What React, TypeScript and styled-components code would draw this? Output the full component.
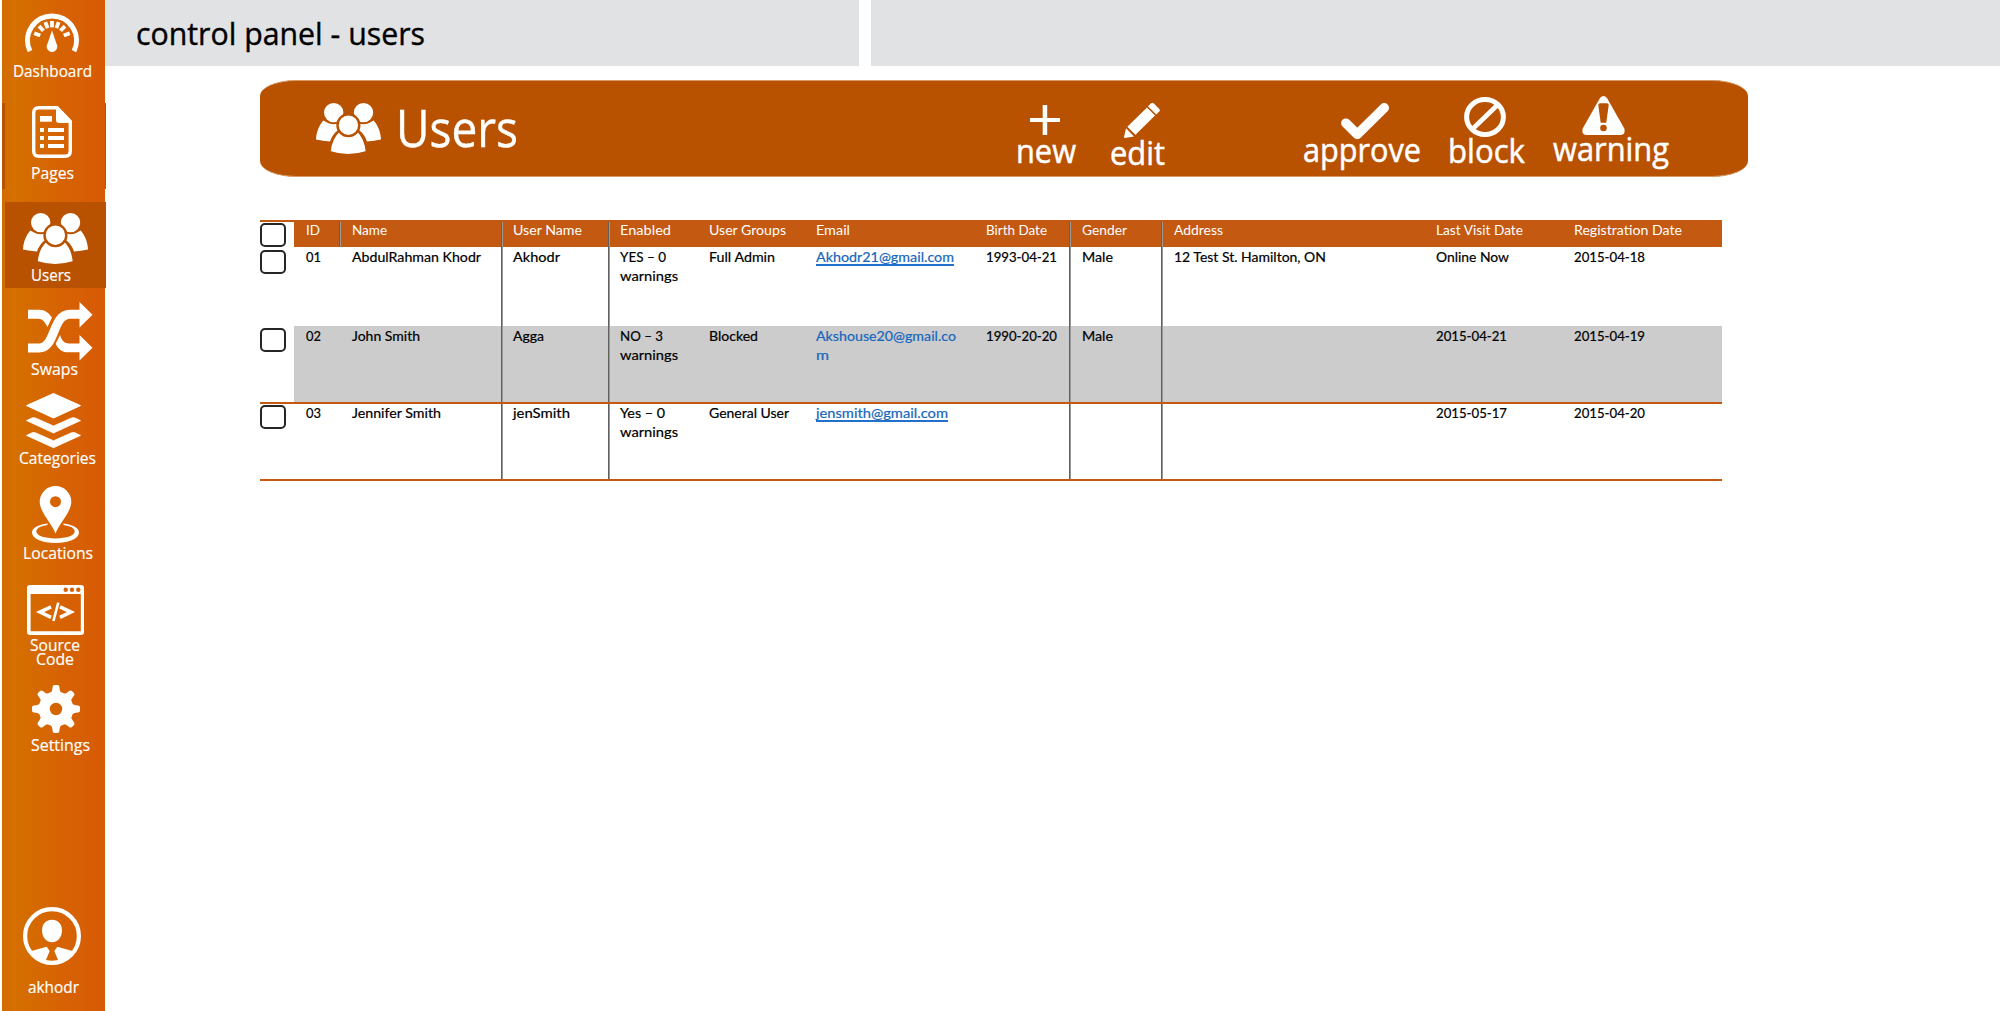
import React, { useLayoutEffect, useRef, useState } from 'react';
import styled, { createGlobalStyle } from 'styled-components';

const RUST = '#b85200';
const HEAD = '#c45911';
const UI = '"Open Sans", "Noto Sans", sans-serif';
const GRID = 'Lato, "Open Sans", sans-serif';

const Global = createGlobalStyle`
  * { box-sizing: border-box; }
  html, body { margin: 0; background: #fff; overflow: hidden; }
`;

/* ---------- text that is condensed to a given width ---------- */

const FitBox = styled.span<{ $w: number }>`
  display: block;
  width: ${p => p.$w}px;
  white-space: nowrap;
`;
const FitInner = styled.span`
  display: inline-block;
  transform-origin: 0 50%;
`;

function Fit({ w, children }: { w: number; children: React.ReactNode }) {
  const ref = useRef<HTMLSpanElement>(null);
  const [scale, setScale] = useState(1);
  useLayoutEffect(() => {
    const el = ref.current;
    if (!el) return;
    const old = el.style.transform;
    el.style.transform = 'none';
    const natural = el.getBoundingClientRect().width;
    el.style.transform = old;
    if (natural > 0) setScale(w / natural);
  }, [w, children]);
  return (
    <FitBox $w={w}>
      <FitInner ref={ref} style={{ transform: `scaleX(${scale})` }}>{children}</FitInner>
    </FitBox>
  );
}

/* ---------- icons ---------- */

const Svg = styled.svg`
  display: block;
  flex: none;
  overflow: visible;
  fill: #fff;
`;

const GaugeIcon = () => (
  <Svg width="54" height="40" viewBox="0 0 54 40">
    <path d="M5 38.2A24.5 24.5 0 1 1 49 38.2" fill="none" stroke="#fff" strokeWidth="5" />
    {[-69, -43, -20.5, 0, 20.5, 43, 69].map(a => (
      <rect key={a} x="25.1" y="8" width="3.8" height="6.4" transform={`rotate(${a} 27 27)`} />
    ))}
    <path d="M27 17.5L31.6 31A5.3 5.3 0 1 1 22.4 31Z" />
  </Svg>
);

const PagesIcon = () => (
  <Svg width="40" height="52" viewBox="0 0 40 52">
    <path d="M7 1.7H25L38.3 15.5V45Q38.3 50.3 33 50.3H7Q1.7 50.3 1.7 45V7Q1.7 1.7 7 1.7Z" fill="none" stroke="#fff" strokeWidth="3.4" />
    <path d="M24 1H26.5L39 14.5V17H27Q24 17 24 14Z" />
    <rect x="8" y="10" width="12" height="5.7" />
    {[22, 30, 38].map(y => (
      <g key={y}>
        <rect x="8" y={y} width="4" height="4" />
        <rect x="16" y={y} width="16" height="4" />
      </g>
    ))}
  </Svg>
);

const UsersIcon = () => (
  <Svg width="65" height="51" viewBox="0 0 65 51">
    <path d="M0 36.4C.4 29 3 22.500 7.300 17.600Q17 24 24 18L22 27Q16 32 14 38.400Q7 37.800 0 36.400Z" />
    <path d="M65 36.400C64.600 29 62 22.500 57.700 17.600Q48 24 41 18L43 27Q49 32 51 38.400Q58 37.800 65 36.400Z" />
    <g stroke={RUST} strokeWidth="2">
      <circle cx="17.700" cy="9.600" r="10.700" />
      <circle cx="47.500" cy="9.600" r="10.700" />
      <path d="M13.700 49C14.500 40 18.500 32 23.500 27.600H41.500C46 32 50 40 50.700 49Q32 55 13.700 49Z" />
      <circle cx="32.400" cy="22.200" r="10.900" strokeWidth="2.400" />
    </g>
  </Svg>
);

const ShuffleIcon = () => (
  <Svg width="65" height="59" viewBox="0 0 65 59">
    <path d="M0 7.700H11C17 7.700 21 11 24 15.500L19.500 25C17 20 14.500 16.700 10 16.700H0Z" />
    <path d="M27.700 41.700C30 47 34 50.300 40 50.300H52V41.500H41C36.500 41.500 33.500 38 32 33Z" />
    <path d="M0 46H11C28 46 24 12.200 42 12.200H53" fill="none" stroke="#fff" strokeWidth="9" />
    <path d="M51.500 0L64.500 12.700 51.500 25.500ZM51.500 33L64.500 45.800 51.500 58.500Z" />
  </Svg>
);

const LayersIcon = () => (
  <Svg width="55" height="55" viewBox="0 0 55 55">
    <path d="M27.500 .5L54.500 12.600 27.500 25 .5 12.600Z" stroke="#fff" strokeLinejoin="round" />
    <path d="M.5 27.600L6 25Q8 24.300 10 25.200L27.500 33 45 25.200Q47 24.300 49 25L54.500 27.600 27.500 40Z" stroke="#fff" strokeWidth=".8" strokeLinejoin="round" />
    <path d="M.5 42.400L6 39.800Q8 39.100 10 40L27.500 47.800 45 40Q47 39.100 49 39.800L54.500 42.400 27.500 54.700Z" stroke="#fff" strokeWidth=".8" strokeLinejoin="round" />
  </Svg>
);

const PinIcon = () => (
  <Svg width="47" height="57" viewBox="0 0 47 57">
    <path fillRule="evenodd" d="M23.500 47.500C20 38 7.700 26 7.700 15.800A15.800 15.800 0 0 1 39.300 15.800C39.300 26 27 38 23.500 47.500ZM23.500 10.200A5.500 5.500 0 1 0 23.500 21.200A5.500 5.500 0 1 0 23.500 10.200Z" />
    <path d="M15.800 37.600C6 38.800 0 42 0 46.500C0 52.600 10 57 23.500 57S47 52.600 47 46.500C47 42 41 38.800 31.200 37.600L31.700 38.900C38 39.900 42.700 42 42.700 45.300C42.700 49.600 34.500 52.400 23.500 52.400S4.300 49.600 4.300 45.300C4.300 42 9 39.900 15.300 38.900Z" />
  </Svg>
);

const CodeIcon = () => (
  <Svg width="57" height="50" viewBox="0 0 57 50">
    <path fillRule="evenodd" d="M3 0H54Q57 0 57 3V47Q57 50 54 50H3Q0 50 0 47V3Q0 0 3 0ZM3.600 9V46.300H53.800V9Z" />
    {[38.700, 45, 51.300].map(x => <circle key={x} cx={x} cy="4.700" r="2.200" fill="#d66303" />)}
    <g fill="none" stroke="#fff">
      <path d="M24 21.800L13 27.100 24 32.400M33 21.800L44 27.100 33 32.400" strokeWidth="3.500" />
      <path d="M31.300 17.600L26.400 36" strokeWidth="2.600" />
    </g>
  </Svg>
);

const GearIcon = () => (
  <Svg width="48" height="48" viewBox="0 0 48 48">
    <circle cx="24" cy="24" r="11.800" fill="none" stroke="#fff" strokeWidth="11.200" />
    {[0, 45, 90, 135, 180, 225, 270, 315].map(a => (
      <path key={a} transform={`rotate(${a} 24 24)`} d="M17.500 8.500C20 7.500 20.300 5 20.600 2Q20.800 0 22.600 0H25.400Q27.200 0 27.400 2C27.700 5 28 7.500 30.500 8.500L28 11H20Z" />
    ))}
  </Svg>
);

const AccountIcon = () => (
  <Svg width="58" height="58" viewBox="0 0 58 58">
    <circle cx="29" cy="29" r="26.900" fill="none" stroke="#fff" strokeWidth="4.200" />
    <path d="M29 12.700C35 12.700 39 17 39 23.500S35 35.200 29 35.200 19 30 19 23.500 23 12.700 29 12.700Z" />
    <path d="M7.500 44.300L23.700 39.700 26.700 44 23 53 27.400 57.800Q14 57 7.500 44.300ZM50.500 44.300L34.300 39.700 31.300 44 35 53 30.600 57.800Q44 57 50.500 44.300Z" />
  </Svg>
);

const PlusIcon = () => (
  <Svg width="30" height="30" viewBox="0 0 30 30">
    <path d="M12.700 0H17.200V12.900H30V17.100H17.200V30H12.700V17.100H0V12.900H12.700Z" />
  </Svg>
);

const PencilIcon = () => (
  <Svg width="36" height="36" viewBox="0 0 36 36">
    <path d="M27 1.300Q28.300 0 29.600 1.300L35.300 7Q36.500 8.300 35.300 9.500L32.200 12.500 24 4.300ZM23 5.400L31 13.500 11.500 32.800 3.300 24.700ZM2 26.200L10 34.500 .8 35.900Q0 35.900 0 35Z" />
  </Svg>
);

const CheckIcon = () => (
  <Svg width="48" height="37" viewBox="0 0 48 37">
    <path d="M4.900 20.200L16.300 31.400 43.200 4.900" fill="none" stroke="#fff" strokeWidth="9.600" strokeLinecap="round" strokeLinejoin="round" />
  </Svg>
);

const BlockIcon = () => (
  <Svg width="42" height="40" viewBox="0 0 42 40">
    <g fill="none" stroke="#fff">
      <ellipse cx="21" cy="20" rx="18.400" ry="17.500" strokeWidth="5" />
      <path d="M8 32.500L34 7.500" strokeWidth="4.600" />
    </g>
  </Svg>
);

const WarningIcon = () => (
  <Svg width="43" height="39" viewBox="0 0 43 39">
    <path d="M18 2Q21.500 -2 25 2L42.300 32.500Q44 38.500 38.500 39H4.500Q-1 38.500 .7 32.500Z" />
    <path d="M16.300 9Q16.300 7.300 18 7.300H25Q26.700 7.300 26.700 9L24.300 26.700H18.700Z" fill={RUST} />
    <circle cx="21.500" cy="32" r="3.300" fill={RUST} />
  </Svg>
);

/* ---------- page frame ---------- */

const Page = styled.div`
  display: flex;
  width: 2000px;
  height: 1011px;
  padding-left: 2px;
  background: #fff;
  font-family: ${UI};
`;

const Sidebar = styled.nav`
  display: flex;
  flex-direction: column;
  flex: none;
  width: 103px;
  height: 1011px;
  background: linear-gradient(90deg, #d26c02 0, #d56f00 12%, #d66203 60%, #d85a05 100%);
`;

const Item = styled.a<{ $h: number; $pad: number; $state?: 'active' | 'edged'; $mt?: string }>`
  display: flex;
  flex-direction: column;
  flex: none;
  width: ${p => (p.$state ? 104 : 103)}px;
  height: ${p => p.$h}px;
  margin-top: ${p => p.$mt || 0};
  padding-top: ${p => p.$pad}px;
  color: #fff;
  ${p => p.$state === 'active' && `margin-left: 3px; width: 101px; background: ${RUST};`}
  ${p => p.$state === 'edged' && `box-shadow: inset 3px 0 ${RUST}, inset -1px 0 ${RUST};`}
`;

const Shift = styled.div<{ $x: number; $y?: number }>`
  margin-left: ${p => p.$x}px;
  margin-top: ${p => p.$y || 0}px;
`;

const NavLabel = styled(Shift)<{ $bold?: boolean; $lh?: number }>`
  font-size: 17px;
  font-weight: ${p => (p.$bold ? 500 : 400)};
  line-height: ${p => p.$lh || 20}px;
  -webkit-text-stroke: 0.2px #fff;
`;

const Main = styled.main`
  display: flex;
  flex-direction: column;
  flex: 1;
  min-width: 0;
`;

const TopBar = styled.header`
  display: grid;
  grid-template-columns: 754px 1fr;
  column-gap: 12px;
  height: 66px;
`;

const TopPanel = styled.div`
  padding: 12px 0 0 31px;
  background: #e1e2e4;
  color: #000;
  font-size: 31px;
  line-height: 42px;
  -webkit-text-stroke: 0.4px #000;
`;

const Banner = styled.section`
  display: flex;
  align-items: flex-start;
  width: 1488px;
  height: 97px;
  margin: 14px 0 0 155px;
  padding-left: 56px;
  border-top: 1px solid #d79a66;
  border-bottom: 1px solid #d79a66;
  border-radius: 36px / 16px;
  background: ${RUST};
  color: #fff;
`;

const BannerTitle = styled.h1`
  width: 620px;
  margin: 11px 0 0 15px;
  font-size: 52px;
  font-weight: 400;
  line-height: 70px;
  -webkit-text-stroke: 0.4px #fff;
`;

const Action = styled.button<{ $w: number; $gap?: number; $pad: number }>`
  flex: none;
  width: ${p => p.$w}px;
  margin: 0 0 0 ${p => p.$gap || 0}px;
  padding: ${p => p.$pad}px 0 0;
  border: 0;
  background: none;
  color: #fff;
  font: 400 32px/40px ${UI};
  text-align: left;
  -webkit-text-stroke: 0.5px #fff;
`;

/* ---------- table ---------- */

const Table = styled.div`
  width: 1462px;
  margin: 43px 0 0 155px;
  border-bottom: 2px solid ${HEAD};
  font: 400 13.200px/19px ${GRID};
  color: #000;
`;

const Row = styled.div<{ $h: number; $kind?: 'head' | 'alt' | 'ruled' }>`
  display: grid;
  grid-template-columns: 34px 45px 162px 107px 90px 107px 170px 94px 92px 263px 138px 160px;
  height: ${p => p.$h}px;
  -webkit-text-stroke: ${p => (p.$kind === 'head' ? '0' : '0.2px currentColor')};
  color: ${p => (p.$kind === 'head' ? '#fff' : '#000')};
  ${p => (p.$kind === 'head' || p.$kind === 'ruled') && `border-top: 2px solid ${HEAD};`}
`;

const Pick = styled.div<{ $top: number }>`
  padding-top: ${p => p.$top}px;
  background: #fff;
`;

const Box = styled.input`
  display: block;
  appearance: none;
  width: 26px;
  height: 24px;
  margin: 0;
  border: 2px solid #262626;
  border-radius: 5px;
  background: #fff;
`;

const Cell = styled.div<{ $bg: string; $line: boolean; $left: number }>`
  padding-left: ${p => p.$left}px;
  background: ${p => p.$bg};
  box-shadow: ${p => (p.$line ? 'inset 1px 0 #5f5f5f, inset 2px 0 #9a9a9a' : 'none')};
`;

const CellText = styled.div<{ $top: number }>`
  margin-top: ${p => p.$top}px;
`;

const Mail = styled.a<{ $under: boolean }>`
  display: block;
  width: max-content;
  height: 18px;
  color: #1767bd;
  border-bottom: ${p => (p.$under ? '2px solid #2070cc' : '0')};
  & + & { margin-top: 1px; }
`;

type T = [string, number];
type RowData = { h: number; kind?: 'head' | 'alt' | 'ruled'; top: number; box: number; link?: boolean; cells: T[][] };

const LEFTS = [12, 13, 12, 12, 11, 11, 11, 13, 13, 12, 12];

const ROWS: RowData[] = [
  { h: 27, kind: 'head', top: -1, box: 1, cells: [
    [['ID', 14]], [['Name', 35]], [['User Name', 69]], [['Enabled', 51]], [['User Groups', 77]], [['Email', 34]],
    [['Birth Date', 61]], [['Gender', 45]], [['Address', 49]], [['Last Visit Date', 87]], [['Registration Date', 108]]] },
  { h: 79, top: 1, box: 3, link: true, cells: [
    [['01', 15]], [['AbdulRahman Khodr', 129]], [['Akhodr', 47]], [['YES – 0', 46], ['warnings', 58]], [['Full Admin', 66]],
    [['Akhodr21@gmail.com', 138]], [['1993-04-21', 71]], [['Male', 31]], [['12 Test St. Hamilton, ON', 152]], [['Online Now', 73]], [['2015-04-18', 71]]] },
  { h: 76, kind: 'alt', top: 1, box: 2, link: false, cells: [
    [['02', 15]], [['John Smith', 68]], [['Agga', 31]], [['NO – 3', 43], ['warnings', 58]], [['Blocked', 49]],
    [['Akshouse20@gmail.co', 140], ['m', 13]], [['1990-20-20', 71]], [['Male', 31]], [], [['2015-04-21', 71]], [['2015-04-19', 71]]] },
  { h: 77, kind: 'ruled', top: 0, box: 1, link: true, cells: [
    [['03', 15]], [['Jennifer Smith', 89]], [['jenSmith', 57]], [['Yes – 0', 45], ['warnings', 58]], [['General User', 80]],
    [['jensmith@gmail.com', 132]], [], [], [], [['2015-05-17', 71]], [['2015-04-20', 71]]] },
];

function TableRow({ row }: { row: RowData }) {
  const bg = row.kind === 'head' ? HEAD : row.kind === 'alt' ? '#cccccc' : '#fff';
  return (
    <Row $h={row.h} $kind={row.kind}>
      <Pick $top={row.box}><Box type="checkbox" /></Pick>
      {row.cells.map((lines, c) => {
        const line = [2, 3, 7, 8].includes(c) || (c === 1 && row.kind === 'head');
        return (
          <Cell key={c} as="div" $bg={bg} $line={line} $left={LEFTS[c]}>
            <CellFlow>
              <CellText $top={row.top}>
                {lines.map(([text, w]) => {
                  const t = <Fit key={text} w={w}>{text}</Fit>;
                  return c === 5 && row.kind !== 'head' ? <Mail key={text} $under={!!row.link}>{t}</Mail> : t;
                })}
              </CellText>
            </CellFlow>
          </Cell>
        );
      })}
    </Row>
  );
}

const CellFlow = styled.div`
  display: flow-root;
`;

/* ---------- navigation data ---------- */

type Nav = {
  h: number; pad: number; icon: React.ReactNode; ix: number; lines: T[]; lx: number[]; ly: number;
  state?: 'active' | 'edged'; mt?: string; bold?: boolean; lh?: number;
};

const NAV: Nav[] = [
  { h: 103, pad: 13, icon: <GaugeIcon />, ix: 23, lines: [['Dashboard', 79]], lx: [11], ly: 8 },
  { h: 86, pad: 3, icon: <PagesIcon />, ix: 30, lines: [['Pages', 43]], lx: [29], ly: 5, state: 'edged', bold: true },
  { h: 86, pad: 11, icon: <UsersIcon />, ix: 18, lines: [['Users', 40]], lx: [26], ly: 1, state: 'active', mt: '13px' },
  { h: 97, pad: 14, icon: <ShuffleIcon />, ix: 26, lines: [['Swaps', 47]], lx: [29], ly: -2 },
  { h: 90, pad: 8, icon: <LayersIcon />, ix: 24, lines: [['Categories', 77]], lx: [17], ly: 0 },
  { h: 95, pad: 11, icon: <PinIcon />, ix: 30, lines: [['Locations', 70]], lx: [21], ly: 0 },
  { h: 105, pad: 15, icon: <CodeIcon />, ix: 25, lines: [['Source', 50], ['Code', 38]], lx: [28, 34], ly: 3, lh: 14 },
  { h: 95, pad: 10, icon: <GearIcon />, ix: 30, lines: [['Settings', 59]], lx: [29], ly: 2 },
  { h: 104, pad: 0, icon: <AccountIcon />, ix: 21, lines: [['akhodr', 51]], lx: [26], ly: 12, mt: 'auto' },
];

export default function App() {
  return (
    <Page>
      <Global />
      <Sidebar>
        {NAV.map(n => (
          <Item key={n.lines[0][0]} $h={n.h} $pad={n.pad} $state={n.state} $mt={n.mt}>
            <Shift $x={n.ix}>{n.icon}</Shift>
            {n.lines.map(([text, w], i) => (
              <NavLabel key={text} $x={n.lx[i]} $y={i ? 0 : n.ly} $bold={n.bold} $lh={n.lh}>
                <Fit w={w}>{text}</Fit>
              </NavLabel>
            ))}
          </Item>
        ))}
      </Sidebar>
      <Main>
        <TopBar>
          <TopPanel><Fit w={289}>control panel - users</Fit></TopPanel>
          <TopPanel />
        </TopBar>
        <Banner>
          <Shift $x={0} $y={22}><UsersIcon /></Shift>
          <BannerTitle><Fit w={122}>Users</Fit></BannerTitle>
          <Action $w={61} $pad={24}>
            <Shift $x={14}><PlusIcon /></Shift>
            <Shift $x={0} $y={-4}><Fit w={60}>new</Fit></Shift>
          </Action>
          <Action $w={56} $gap={33} $pad={21}>
            <Shift $x={14}><PencilIcon /></Shift>
            <Shift $x={0} $y={-5}><Fit w={55}>edit</Fit></Shift>
          </Action>
          <Action $w={118} $gap={137} $pad={22}>
            <Shift $x={38}><CheckIcon /></Shift>
            <Shift $x={0} $y={-10}><Fit w={118}>approve</Fit></Shift>
          </Action>
          <Action $w={77} $gap={27} $pad={16}>
            <Shift $x={16}><BlockIcon /></Shift>
            <Shift $x={0} $y={-6}><Fit w={77}>block</Fit></Shift>
          </Action>
          <Action $w={117} $gap={27} $pad={15}>
            <Shift $x={30}><WarningIcon /></Shift>
            <Shift $x={1} $y={-6}><Fit w={116}>warning</Fit></Shift>
          </Action>
        </Banner>
        <Table>
          {ROWS.map((row, i) => <TableRow key={i} row={row} />)}
        </Table>
      </Main>
    </Page>
  );
}
